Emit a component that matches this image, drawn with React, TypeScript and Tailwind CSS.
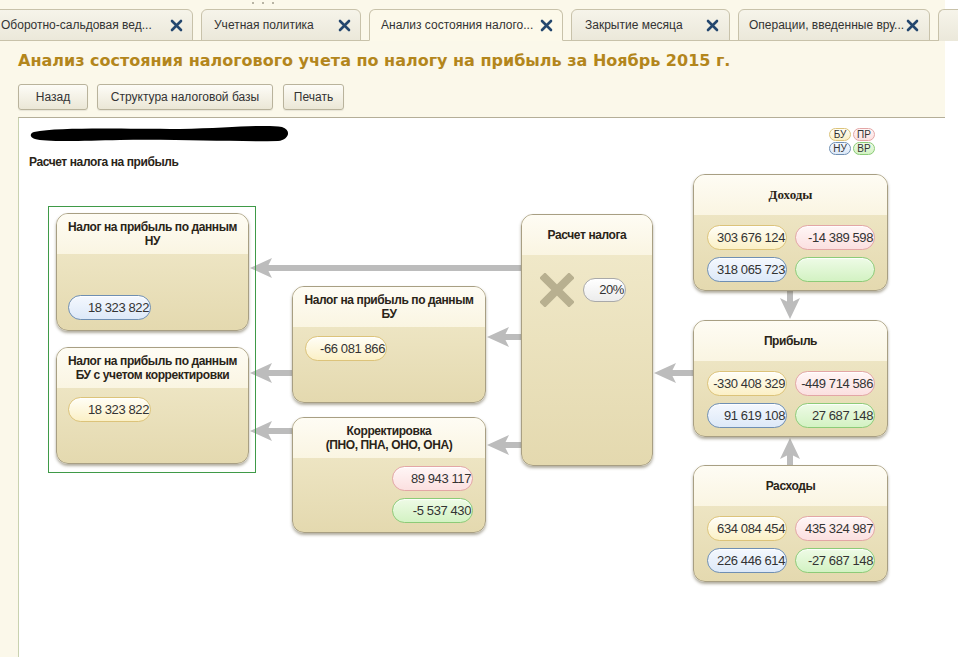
import React from 'react';

type Tone = 'bu' | 'pr' | 'nu' | 'vr' | 'plain';

const toneClass: Record<Tone, string> = {
    bu: 'border-[#dcc37a] bg-gradient-to-b from-[#fffef6] to-[#fbf0c6]',
    pr: 'border-[#e3a6a6] bg-gradient-to-b from-[#fff6f6] to-[#fbe0e0]',
    nu: 'border-[#6f8fb3] bg-gradient-to-b from-[#f4f8fe] to-[#dde9f8]',
    vr: 'border-[#8ccb78] bg-gradient-to-b from-[#eefbe6] to-[#d3f2c3]',
    plain: 'border-[#a9a9a9] bg-gradient-to-b from-[#ffffff] to-[#ececec]',
};

function Pill({ tone, value, className = '' }: { tone: Tone; value?: string; className?: string }) {
    return (
        <div
            className={`h-[25px] rounded-full border flex items-center justify-end overflow-hidden pr-[1px] text-[13px] tracking-[-0.4px] text-[#333] shadow-[inset_0_1px_1px_rgba(255,255,255,0.9)] ${toneClass[tone]} ${className}`}
        >
            {value}
        </div>
    );
}

function Card({
    title,
    serif,
    className,
    children,
}: {
    title: React.ReactNode;
    serif?: boolean;
    className: string;
    children?: React.ReactNode;
}) {
    return (
        <div
            className={`absolute rounded-[12px] border border-[#a89f83] overflow-hidden flex flex-col shadow-[0_2px_3px_rgba(80,70,40,0.45)] bg-gradient-to-b from-[#f2ebcd] to-[#e4d9af] ${className}`}
        >
            <div
                className={`h-[40px] shrink-0 flex items-center justify-center text-center leading-[14px] font-bold text-[#2a2418] bg-gradient-to-b from-[#fefcf4] to-[#faf5e2] ${
                    serif ? "font-['Liberation_Serif'] text-[13px]" : 'text-[12px] tracking-[-0.4px]'
                }`}
            >
                {title}
            </div>
            <div className="relative flex-1">{children}</div>
        </div>
    );
}

function Tab({ label, active, className }: { label: string; active?: boolean; className: string }) {
    return (
        <div
            className={`h-[32px] shrink-0 rounded-t-[6px] border border-[#c8c2aa] flex items-center justify-between text-[12px] text-[#333] ${
                active ? 'bg-[#fcf9ea] border-b-[#fcf9ea]' : 'bg-gradient-to-b from-[#f6f4ea] to-[#ebe8da]'
            } ${className}`}
        >
            <span className="whitespace-nowrap">{label}</span>
            <svg width="13" height="13" viewBox="0 0 13 13">
                <path d="M2 2 L11 11 M11 2 L2 11" stroke="#24476e" strokeWidth="2.6" strokeLinecap="round" />
            </svg>
        </div>
    );
}

function ToolButton({ children, className }: { children: React.ReactNode; className: string }) {
    return (
        <button
            className={`h-[26px] rounded-[3px] border border-[#b9b39c] bg-gradient-to-b from-[#fdfcf7] to-[#ebe7d6] text-[12px] text-[#333] shadow-[0_1px_1px_rgba(0,0,0,0.08)] ${className}`}
        >
            {children}
        </button>
    );
}

function LegendChip({ label, tone }: { label: string; tone: Tone }) {
    return (
        <div
            className={`h-[13px] w-[22px] rounded-full border flex items-center justify-center text-[10px] leading-none text-[#333] ${toneClass[tone]}`}
        >
            {label}
        </div>
    );
}

// gray connectors between the blocks, drawn under the cards
function Arrows() {
    const color = '#bcbcbc';
    const left = (x: number, y: number) => `${x},${y} ${x + 22},${y - 10} ${x + 17},${y} ${x + 22},${y + 10}`;
    return (
        <svg className="absolute inset-0 pointer-events-none" width="927" height="540">
            <g stroke={color} strokeWidth="6" fill="none">
                <line x1="502" y1="150" x2="248" y2="150" />
                <line x1="502" y1="219" x2="485" y2="219" />
                <line x1="502" y1="327" x2="485" y2="327" />
                <line x1="273" y1="255" x2="248" y2="255" />
                <line x1="273" y1="313" x2="248" y2="313" />
                <line x1="674" y1="255" x2="652" y2="255" />
                <line x1="771" y1="173" x2="771" y2="185" />
                <line x1="771" y1="347" x2="771" y2="336" />
            </g>
            <g fill={color}>
                <polygon points={left(231, 150)} />
                <polygon points={left(468, 219)} />
                <polygon points={left(468, 327)} />
                <polygon points={left(231, 255)} />
                <polygon points={left(231, 313)} />
                <polygon points={left(635, 255)} />
                <polygon points="771,201 761,180 771,185 781,180" />
                <polygon points="771,320 761,341 771,336 781,341" />
            </g>
        </svg>
    );
}

export default function App() {
    return (
        <div className="w-[958px] h-[657px] overflow-hidden bg-white flex font-['Liberation_Sans',Arial,sans-serif]">
            <div className="w-[945px] shrink-0 flex flex-col bg-[#fbf8ea]">
                {/* tabs */}
                <div className="relative h-[41px] shrink-0 flex items-end gap-[8px] border-b border-[#c8c2aa] pl-0">
                    <div className="absolute left-[252px] top-[2px] flex gap-[8px]">
                        <span className="w-[2px] h-[2px] bg-[#b8b4a4]" />
                        <span className="w-[2px] h-[2px] bg-[#b8b4a4]" />
                        <span className="w-[2px] h-[2px] bg-[#b8b4a4]" />
                    </div>
                    <Tab label="Оборотно-сальдовая вед..." className="-mb-px -ml-[10px] w-[203px] pl-[10px] pr-[9px]" />
                    <Tab label="Учетная политика" className="-mb-px w-[160px] pl-[12px] pr-[9px]" />
                    <Tab label="Анализ состояния налого..." active className="-mb-px w-[194px] pl-[11px] pr-[9px]" />
                    <Tab label="Закрытие месяца" className="-mb-px w-[159px] pl-[13px] pr-[10px]" />
                    <Tab label="Операции, введенные вру..." className="-mb-px w-[192px] pl-[10px] pr-[10px]" />
                    <div className="-mb-px h-[32px] w-[20px] shrink-0 rounded-tl-[6px] border-l border-t border-[#c8c2aa] bg-gradient-to-b from-[#f6f4ea] to-[#ebe8da]" />
                </div>

                <h1 className="mt-[9px] ml-[18px] text-[16px] leading-[21px] font-bold text-[#b3861c] font-['DejaVu_Sans',sans-serif] whitespace-nowrap">
                    Анализ состояния налогового учета по налогу на прибыль за Ноябрь 2015 г.
                </h1>

                <div className="mt-[13px] ml-[18px] flex gap-[9px]">
                    <ToolButton className="w-[70px]">Назад</ToolButton>
                    <ToolButton className="w-[176px]">Структура налоговой базы</ToolButton>
                    <ToolButton className="w-[61px] ml-[1px]">Печать</ToolButton>
                </div>

                <div className="mt-[7px] ml-[18px] flex-1 bg-white border-t border-l border-t-[#b4ae98] border-l-[#c9d2b0]">
                    <div className="relative w-[927px] h-[540px]">
                        <svg className="absolute left-[11px] top-[5px]" width="260" height="22" viewBox="0 0 260 22">
                            <path
                                d="M4 9 C 30 4, 90 6, 150 6 C 200 5, 235 1, 252 4 C 262 7, 259 17, 248 18 C 200 19, 150 16, 90 17 C 50 18, 15 19, 5 16 C -1 14, 0 10, 4 9 Z"
                                fill="#000"
                            />
                        </svg>

                        <div className="absolute left-[10px] top-[37px] text-[12px] leading-[14px] font-bold tracking-[-0.4px] text-[#2a2418]">
                            Расчет налога на прибыль
                        </div>

                        <div className="absolute left-[810px] top-[10px] flex flex-col gap-[1px]">
                            <div className="flex gap-[2px]">
                                <LegendChip label="БУ" tone="bu" />
                                <LegendChip label="ПР" tone="pr" />
                            </div>
                            <div className="flex gap-[2px]">
                                <LegendChip label="НУ" tone="nu" />
                                <LegendChip label="ВР" tone="vr" />
                            </div>
                        </div>

                        <Arrows />

                        <div className="absolute left-[29px] top-[88px] w-[208px] h-[267px] border border-[#3f9a48]" />

                        <Card
                            className="left-[37px] top-[95px] w-[193px] h-[118px]"
                            title={<>Налог на прибыль по данным<br />НУ</>}
                        >
                            <Pill tone="nu" value="18 323 822" className="absolute left-[11px] top-[41px] w-[83px]" />
                        </Card>

                        <Card
                            className="left-[37px] top-[229px] w-[193px] h-[117px]"
                            title={<>Налог на прибыль по данным<br />БУ с учетом корректировки</>}
                        >
                            <Pill tone="bu" value="18 323 822" className="absolute left-[11px] top-[9px] w-[83px]" />
                        </Card>

                        <Card
                            className="left-[273px] top-[168px] w-[194px] h-[117px]"
                            title={<>Налог на прибыль по данным<br />БУ</>}
                        >
                            <Pill tone="bu" value="-66 081 866" className="absolute left-[12px] top-[9px] w-[82px]" />
                        </Card>

                        <Card
                            className="left-[273px] top-[299px] w-[194px] h-[116px]"
                            title={<>Корректировка<br />(ПНО, ПНА, ОНО, ОНА)</>}
                        >
                            <div className="flex flex-col items-end gap-[7px] pt-[8px] pr-[12px]">
                                <Pill tone="pr" value="89 943 117" className="w-[81px]" />
                                <Pill tone="vr" value="-5 537 430" className="w-[81px]" />
                            </div>
                        </Card>

                        <Card className="left-[502px] top-[96px] w-[132px] h-[252px]" title="Расчет налога">
                            <svg className="absolute left-[18px] top-[18px]" width="34" height="34" viewBox="0 0 34 34">
                                <path d="M5 5 L29 29 M29 5 L5 29" stroke="#b8b090" strokeWidth="8" strokeLinecap="square" />
                            </svg>
                            <Pill tone="plain" value="20%" className="absolute left-[61px] top-[23px] w-[43px] !h-[24px]" />
                        </Card>

                        {[
                            { title: 'Доходы', serif: true, pos: 'left-[674px] top-[56px]', v: ['303 676 124', '-14 389 598', '318 065 723', ''] },
                            { title: 'Прибыль', serif: false, pos: 'left-[674px] top-[202px]', v: ['-330 408 329', '-449 714 586', '91 619 108', '27 687 148'] },
                            { title: 'Расходы', serif: false, pos: 'left-[674px] top-[347px]', v: ['634 084 454', '435 324 987', '226 446 614', '-27 687 148'] },
                        ].map((c) => (
                            <Card key={c.title} serif={c.serif} className={`${c.pos} w-[195px] h-[117px]`} title={c.title}>
                                <div className="grid grid-cols-[80px_80px] gap-x-[8px] gap-y-[7px] pt-[10px] pl-[13px]">
                                    <Pill tone="bu" value={c.v[0]} />
                                    <Pill tone="pr" value={c.v[1]} />
                                    <Pill tone="nu" value={c.v[2]} />
                                    <Pill tone="vr" value={c.v[3]} />
                                </div>
                            </Card>
                        ))}
                    </div>
                </div>
            </div>
            <div className="flex-1 bg-white" />
        </div>
    );
}
